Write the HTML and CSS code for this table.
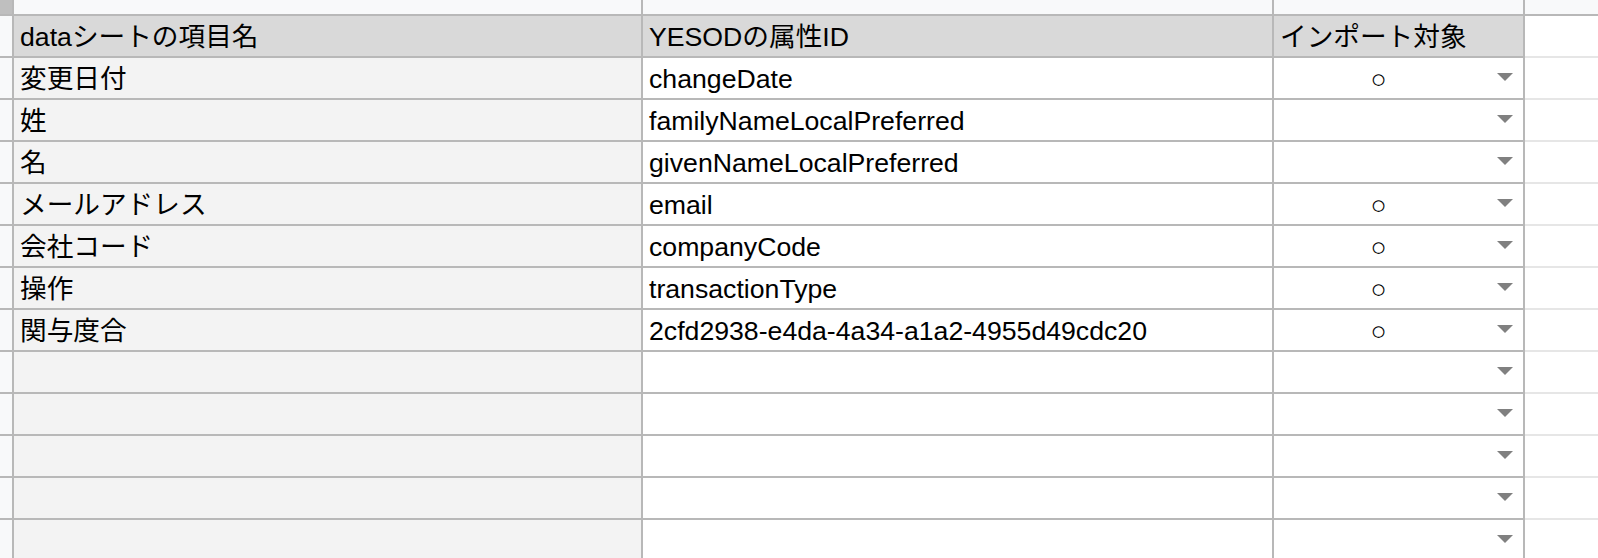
FILE: index.html
```html
<!DOCTYPE html>
<html lang="ja">
<head>
<meta charset="utf-8">
<title>インポート設定</title>
<link rel="stylesheet" href="styles.css">
</head>
<body>
<div class="sheet">
  <div class="row top">
    <div class="cell corner"></div>
    <div class="cell strip"></div>
    <div class="cell strip"></div>
    <div class="cell strip"></div>
    <div class="cell strip"></div>
  </div>
  <div class="row head">
    <div class="cell rh"></div>
    <div class="cell h">dataシートの項目名</div>
    <div class="cell h">YESODの属性ID</div>
    <div class="cell h">インポート対象</div>
    <div class="cell extra"></div>
  </div>
  <div class="row">
    <div class="cell rh"></div>
    <div class="cell a">変更日付</div>
    <div class="cell b">changeDate</div>
    <div class="cell c"><span class="val">○</span><span class="arrow"></span></div>
    <div class="cell extra"></div>
  </div>
  <div class="row">
    <div class="cell rh"></div>
    <div class="cell a">姓</div>
    <div class="cell b">familyNameLocalPreferred</div>
    <div class="cell c"><span class="val"></span><span class="arrow"></span></div>
    <div class="cell extra"></div>
  </div>
  <div class="row">
    <div class="cell rh"></div>
    <div class="cell a">名</div>
    <div class="cell b">givenNameLocalPreferred</div>
    <div class="cell c"><span class="val"></span><span class="arrow"></span></div>
    <div class="cell extra"></div>
  </div>
  <div class="row">
    <div class="cell rh"></div>
    <div class="cell a">メールアドレス</div>
    <div class="cell b">email</div>
    <div class="cell c"><span class="val">○</span><span class="arrow"></span></div>
    <div class="cell extra"></div>
  </div>
  <div class="row">
    <div class="cell rh"></div>
    <div class="cell a">会社コード</div>
    <div class="cell b">companyCode</div>
    <div class="cell c"><span class="val">○</span><span class="arrow"></span></div>
    <div class="cell extra"></div>
  </div>
  <div class="row">
    <div class="cell rh"></div>
    <div class="cell a">操作</div>
    <div class="cell b">transactionType</div>
    <div class="cell c"><span class="val">○</span><span class="arrow"></span></div>
    <div class="cell extra"></div>
  </div>
  <div class="row">
    <div class="cell rh"></div>
    <div class="cell a">関与度合</div>
    <div class="cell b">2cfd2938-e4da-4a34-a1a2-4955d49cdc20</div>
    <div class="cell c"><span class="val">○</span><span class="arrow"></span></div>
    <div class="cell extra"></div>
  </div>
  <div class="row">
    <div class="cell rh"></div>
    <div class="cell a"></div>
    <div class="cell b"></div>
    <div class="cell c"><span class="val"></span><span class="arrow"></span></div>
    <div class="cell extra"></div>
  </div>
  <div class="row">
    <div class="cell rh"></div>
    <div class="cell a"></div>
    <div class="cell b"></div>
    <div class="cell c"><span class="val"></span><span class="arrow"></span></div>
    <div class="cell extra"></div>
  </div>
  <div class="row">
    <div class="cell rh"></div>
    <div class="cell a"></div>
    <div class="cell b"></div>
    <div class="cell c"><span class="val"></span><span class="arrow"></span></div>
    <div class="cell extra"></div>
  </div>
  <div class="row">
    <div class="cell rh"></div>
    <div class="cell a"></div>
    <div class="cell b"></div>
    <div class="cell c"><span class="val"></span><span class="arrow"></span></div>
    <div class="cell extra"></div>
  </div>
  <div class="row">
    <div class="cell rh"></div>
    <div class="cell a"></div>
    <div class="cell b"></div>
    <div class="cell c"><span class="val"></span><span class="arrow"></span></div>
    <div class="cell extra"></div>
  </div>
</div>
</body>
</html>
```

FILE: styles.css
```css
html, body {
  margin: 0;
  padding: 0;
  background: #ffffff;
  overflow: hidden;
}

.sheet {
  display: grid;
  row-gap: 2px;
  background: #b8b8b8;
  width: 1598px;
  height: 558px;
  overflow: hidden;
  align-content: start;
  font-family: "Liberation Sans", Arial, "Noto Sans CJK JP", sans-serif;
  font-size: 26.67px;
  color: #000000;
}

.row {
  display: grid;
  grid-template-columns: 12px 627px 629px 249px 1fr;
  column-gap: 2px;
  height: 40px;
}

.row.top {
  height: 14px;
}

.cell {
  background: #ffffff;
  line-height: 38px;
  padding-top: 2px;
  padding-left: 6px;
  white-space: nowrap;
  overflow: hidden;
}

.corner {
  background: #bfbfbf;
  padding: 0;
}

.strip {
  background: #f8f9fa;
  padding: 0;
}

.rh {
  background: #f8f9fa;
  padding: 0;
}

.h {
  background: #d9d9d9;
}

.a {
  background: #f3f3f3;
}

.c {
  display: flex;
  padding-left: 0;
  padding-top: 0;
}

.val {
  flex: 1;
  text-align: center;
  padding-top: 2px;
}

.arrow {
  width: 0;
  height: 0;
  margin: 15px 10px 0 14px;
  border-left: 8px solid transparent;
  border-right: 8px solid transparent;
  border-top: 8px solid #808080;
}

.extra {
  padding: 0;
  box-shadow: 0 2px 0 0 #e6e6e6;
}
```
